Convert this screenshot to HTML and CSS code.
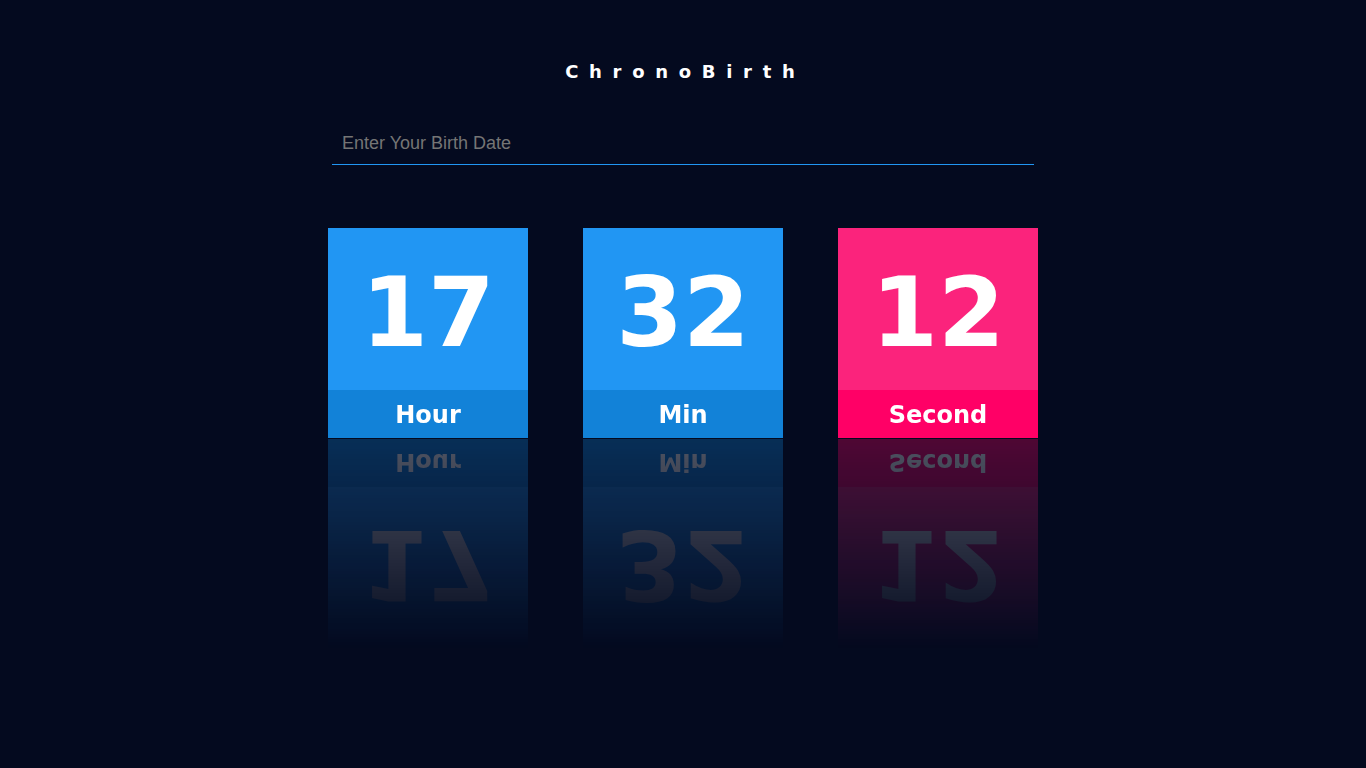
FILE: index.html
```html
<!DOCTYPE html>
<html lang="en">
<head>
<meta charset="utf-8">
<title>ChronoBirth</title>
<link rel="stylesheet" href="styles.css">
</head>
<body>
  <main class="app">
    <h1 class="title">ChronoBirth</h1>
    <input class="date-input" type="text" placeholder="Enter Your Birth Date">
    <section class="cards">
      <div class="card card-blue">
        <div class="card-value">17</div>
        <div class="card-label">Hour</div>
      </div>
      <div class="card card-blue">
        <div class="card-value">32</div>
        <div class="card-label">Min</div>
      </div>
      <div class="card card-pink">
        <div class="card-value">12</div>
        <div class="card-label">Second</div>
      </div>
    </section>
  </main>
</body>
</html>
```

FILE: styles.css
```css
html, body {
  margin: 0;
  padding: 0;
  height: 100%;
}

body {
  background: #040a1f;
  font-family: "DejaVu Sans", Verdana, sans-serif;
  color: #ffffff;
}

.app {
  width: 710px;
  margin: 0 auto;
  padding-top: 60px;
  display: flex;
  flex-direction: column;
  align-items: center;
}

.title {
  margin: 0;
  font-size: 18px;
  font-weight: bold;
  letter-spacing: 10.7px;
  padding-left: 4.7px;
  line-height: 24px;
}

.date-input {
  box-sizing: border-box;
  margin-top: 40px;
  width: 702px;
  height: 41px;
  padding: 0 10px 2px;
  background: transparent;
  border: none;
  border-bottom: 1px solid #2196f3;
  outline: none;
  color: #ffffff;
  font-family: "Liberation Sans", Arial, sans-serif;
  font-size: 18px;
}

.date-input::placeholder {
  color: #757575;
}

.cards {
  margin-top: 63px;
  width: 100%;
  display: flex;
  justify-content: space-between;
}

.card {
  width: 200px;
  display: flex;
  flex-direction: column;
  -webkit-box-reflect: below 1px linear-gradient(transparent, rgba(0, 0, 0, 0.3));
}

.card-value {
  height: 162px;
  display: flex;
  align-items: center;
  justify-content: center;
  font-size: 96px;
  font-weight: bold;
  line-height: 1;
  padding-top: 8px;
  box-sizing: border-box;
}

.card-label {
  height: 48px;
  display: flex;
  align-items: center;
  justify-content: center;
  font-size: 24px;
  font-weight: bold;
  padding-top: 2px;
  box-sizing: border-box;
}

.card-blue .card-value { background: #2196f3; }
.card-blue .card-label { background: #1282d8; }
.card-pink .card-value { background: #fb237c; }
.card-pink .card-label { background: #ff0066; }
```
